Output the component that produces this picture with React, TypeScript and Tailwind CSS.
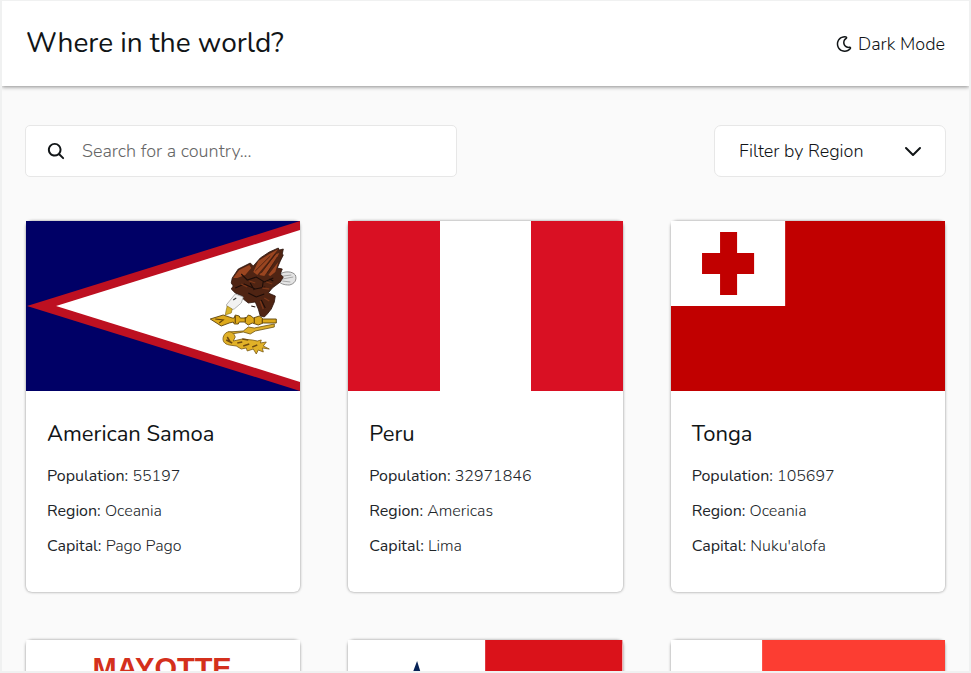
import React from "react";
import { FaRegMoon } from "react-icons/fa";
import { IoSearch } from "react-icons/io5";

type Details = { name: string; population: string; region: string; capital: string };
type Country = { id: string; flag: React.ReactNode; details?: Details };

const flagClass = "block h-[170px] w-full";

function AmericanSamoaFlag() {
  return (
    <svg className={flagClass} viewBox="0 0 274 170" preserveAspectRatio="none" role="img" aria-label="Flag of American Samoa">
      <rect width="274" height="170" fill="#000066" />
      <path d="M1 85 274 0v170z" fill="#bd1021" />
      <path d="M30 85 274 9v152z" fill="#fff" />
      {/* tail */}
      <path d="M254 53c4-3 12-3 15 1 2 5-1 9-6 10-5 0-9-1-12-5z" fill="#e4e4e4" stroke="#777" strokeWidth="0.8" />
      <path d="m256 58 11-2m-11 4 8 1m-7-6 8-1" stroke="#999" strokeWidth="0.8" />
      {/* body and wings */}
      <path
        d="m206 57 6-9 12-6 3 3 7-8 9-6 9-4 1 2 4-1-1 5 1 1-3 6-3 7 5 1-2 5 3 3-3 5-8 6-4 5 7 3-1 6-3 7-4 5-3 3-4-1-2-7-3-7-7 1-5-4-1-3-7-3-4-4 2-3-2-3z"
        fill="#4f2413"
        stroke="#2b130b"
        strokeWidth="0.8"
      />
      <path d="m227 51 5-11 11-7 9-5-11 14-10 12zm6 3 17-21 3-1-3 6-12 17zm9 0 10-13-3 10-5 4zM207 57l6-8 10-5 2 3-6 7-8 3z" fill="#9a4520" />
      <path d="m229 50 15-15m-9 17 14-19m-8 19 10-16" stroke="#38180d" strokeWidth="0.7" />
      <path d="m215 53 6 6 9-3 8 5 9-4m-38 10 9-4 11 5 10-2m-17 6 8 4 8-3m-3 6 4 8m-15-25 4 7m9-9-1 7m7-9 4 2m-22 25 4 1" stroke="#1c0d09" strokeWidth="1.1" fill="none" />
      <path d="m223 60 6 2m7 5 7 1m-5 9 5 3m-28-17 6 3m19-5 6 2m-12 17 3 8" stroke="#7c3719" strokeWidth="1.3" />
      {/* head and beak */}
      <path d="m209 73 8 3-2 6-7 6-5 1-3-5z" fill="#f2f2f2" stroke="#999" strokeWidth="0.7" />
      <path d="m201 85 5 3-1 4-6 2 1-5z" fill="#d9b62b" stroke="#836914" strokeWidth="0.6" />
      <path d="m207 79 3-2" stroke="#333" />
      {/* staff */}
      <path
        d="m184 98 13-4 9 3h2l1-3 4 1 1 2h6l2-3 3 1 2 2 6-2 4 3h13v4h-13l-5 2-6-2-4 2-4-3h-5l-1 2h-4l-1-2-4 1-8 3z"
        fill="#dda91b"
        stroke="#5c430c"
        strokeWidth="0.9"
      />
      <path d="m189 98 8 1-4 3m16-7v7m10-6v5m9-4v5m8-4v4" stroke="#624108" strokeWidth="1.1" fill="none" />
      {/* whisk */}
      <path d="m202 111 15-1 5-4 6 1 20-4v3l-19 4-5 3-7-2-12 2z" fill="#dfb02a" stroke="#6b500f" strokeWidth="0.8" />
      <path
        d="M197 116c2-7 10-7 12 0l-2 4 9-2 10 1 5 1 4-1-1 3 6-1-3 4 6 3-7-1 1 4-5-2-2 4-3-5-6 2-1-3-5 1-5-3-7-1c-5-1-7-4-6-8z"
        fill="#e1b128"
        stroke="#7a5a14"
        strokeWidth="0.8"
      />
      <path d="m201 116 3 5m7 1 5-1m1 4 6-2m3 3 5-2m-25-2-6-3m16-1 6 1" stroke="#704b10" strokeWidth="1.5" />
    </svg>
  );
}

function PeruFlag() {
  return (
    <div className="grid h-[170px] grid-cols-3" role="img" aria-label="Flag of Peru">
      <div className="bg-[#d91023]" />
      <div className="bg-white" />
      <div className="bg-[#d91023]" />
    </div>
  );
}

function TongaFlag() {
  return (
    <svg className={flagClass} viewBox="0 0 274 170" preserveAspectRatio="none" role="img" aria-label="Flag of Tonga">
      <rect width="274" height="170" fill="#c10000" />
      <rect width="114" height="85" fill="#fff" />
      <path d="M49 11h17v21h17v21H66v21H49V53H31V32h18z" fill="#c10000" />
    </svg>
  );
}

function MayotteFlag() {
  return (
    <svg className={flagClass} viewBox="0 0 274 170" role="img" aria-label="Flag of Mayotte">
      <rect width="274" height="170" fill="#fff" />
      <text x="136" y="38" textAnchor="middle" fontSize="29" fontWeight="700" fill="#d4301c" className="font-['Liberation_Sans',sans-serif]">
        MAYOTTE
      </text>
    </svg>
  );
}

function PanamaFlag() {
  return (
    <svg className={flagClass} viewBox="0 0 274 170" preserveAspectRatio="none" role="img" aria-label="Flag of Panama">
      <rect width="274" height="170" fill="#fff" />
      <path d="M137 0h137v85H137z" fill="#da121a" />
      <path d="M0 85h137v85H0z" fill="#072357" />
      <path d="m69 21 5 16h17L77 47l5 16-13-10-14 10 5-16-14-10h17z" fill="#072357" />
    </svg>
  );
}

function MadagascarFlag() {
  return (
    <svg className={flagClass} viewBox="0 0 274 170" preserveAspectRatio="none" role="img" aria-label="Flag of Madagascar">
      <rect width="274" height="170" fill="#fff" />
      <path d="M91 0h183v85H91z" fill="#fc3d32" />
      <path d="M91 85h183v85H91z" fill="#007e3a" />
    </svg>
  );
}

const countries: Country[] = [
  { id: "as", flag: <AmericanSamoaFlag />, details: { name: "American Samoa", population: "55197", region: "Oceania", capital: "Pago Pago" } },
  { id: "pe", flag: <PeruFlag />, details: { name: "Peru", population: "32971846", region: "Americas", capital: "Lima" } },
  { id: "to", flag: <TongaFlag />, details: { name: "Tonga", population: "105697", region: "Oceania", capital: "Nuku'alofa" } },
  { id: "yt", flag: <MayotteFlag /> },
  { id: "pa", flag: <PanamaFlag /> },
  { id: "mg", flag: <MadagascarFlag /> },
];

function Fact({ label, value }: { label: string; value: string }) {
  return (
    <p>
      {label}: <span className="font-light">{value}</span>
    </p>
  );
}

function CountryCard({ flag, details }: Country) {
  return (
    <article className="rounded-md bg-white shadow-[0_0_3px_rgba(0,0,0,0.45)]">
      {flag}
      {details && (
        <div className="px-[21px] pt-7 pb-7">
          <h2 className="text-[22px] leading-[30px]">{details.name}</h2>
          <div className="mt-2.5 text-base leading-[35px] text-[#212529]">
            <Fact label="Population" value={details.population} />
            <Fact label="Region" value={details.region} />
            <Fact label="Capital" value={details.capital} />
          </div>
        </div>
      )}
    </article>
  );
}

export default function App() {
  return (
    <div className="h-screen overflow-hidden border-x-2 border-t border-b-2 border-[#f0f1f1] bg-[#fafafa] font-['Nunito','Lato',sans-serif] text-[#111517]">
      <header className="flex h-[85px] items-center justify-between bg-white px-6 shadow-[0_1px_4px_rgba(0,0,0,0.45)]">
        <h1 className="pb-0.5 text-[28px] leading-9">Where in the world?</h1>
        <button type="button" className="flex items-center gap-1.5 text-lg font-light">
          <FaRegMoon className="size-4" />
          Dark Mode
        </button>
      </header>

      <main className="px-[23px] pt-[39px]">
        <div className="flex items-center justify-between">
          <label className="flex h-[52px] w-[432px] items-center gap-4 rounded-[5px] border border-[#e7e7e7] bg-white px-5">
            <IoSearch className="size-5" />
            <input
              type="text"
              aria-label="Search for a country"
              placeholder="Search for a country..."
              className="min-w-0 flex-1 bg-transparent text-lg font-light outline-none placeholder:text-[#666]"
            />
          </label>
          <div className="relative">
            <select aria-label="Filter by Region" className="h-[52px] w-[232px] appearance-none rounded-[7px] border border-[#e7e7e7] bg-white px-6 text-lg font-light">
              <option>Filter by Region</option>
            </select>
            <svg className="pointer-events-none absolute top-4 right-6 size-5" viewBox="0 0 20 20" fill="none" stroke="currentColor" strokeWidth="2" strokeLinecap="round" strokeLinejoin="round" aria-hidden="true">
              <path d="m4 7 7 7 7-7" />
            </svg>
          </div>
        </div>

        <section className="mt-11 grid grid-cols-3 gap-x-12 gap-y-12 px-px">
          {countries.map((country) => (
            <CountryCard key={country.id} {...country} />
          ))}
        </section>
      </main>
    </div>
  );
}
